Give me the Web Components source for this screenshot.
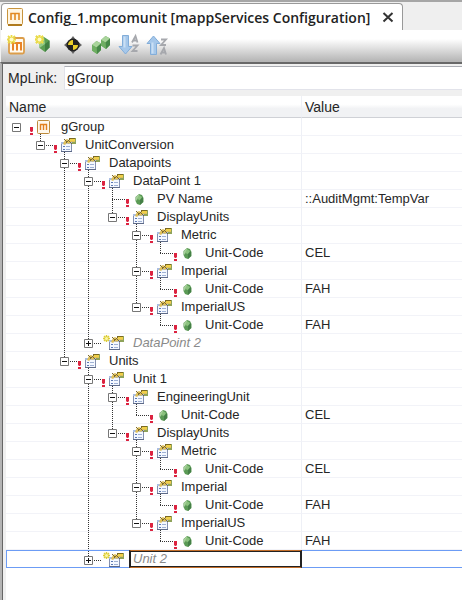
<!DOCTYPE html>
<html lang="en">
<head>
  <meta charset="utf-8">
  <title>Config_1.mpcomunit</title>
  <style>
    body {
      margin: 0;
      min-height: 100vh;
      display: flex;
      flex-direction: column;
      background: #f0f0f0;
      color: #262626;
      font: 14px "Liberation Sans", Arial, sans-serif;
    }
  </style>
</head>
<body>
  <template id="editor-tab-template">
    <style>
      :host {
        display: flex;
        height: 30px;
        box-sizing: border-box;
        border-top: 2px solid #a6a6a6;
        padding: 1px 0 0 1px;
        background: #efefef;
      }
      .tab {
        display: flex;
        align-items: center;
        box-sizing: border-box;
        width: 402px;
        padding: 0 8px 0 5px;
        border: 1px solid #999;
        border-bottom: none;
        border-radius: 4px 4px 0 0;
        background: #fff;
      }
      svg { display: block; }
      .title {
        flex: 1;
        margin-left: 5px;
        font: 600 14px "Open Sans", "Noto Sans", sans-serif;
        white-space: nowrap;
        color: #222;
      }
      button {
        padding: 0;
        border: none;
        background: none;
      }
    </style>
    <div class="tab">
      <svg width="16" height="18" viewBox="0 0 16 18">
        <rect x=".5" y=".5" width="15" height="16" rx="1" fill="#fff6e4" stroke="#c8943c"/>
        <path d="M1 17h14" stroke="#b07a1c" stroke-width="2"/>
        <path d="M4 12V5.5h8V12M8 5.5V12" fill="none" stroke="#e28a24" stroke-width="1.6"/>
      </svg>
      <span class="title"><slot></slot></span>
      <button aria-label="Close">
        <svg width="12" height="12" viewBox="0 0 12 12"><path d="M1.500 2l9 8.500M10.500 2l-9 8.500" stroke="#333" stroke-width="2"/></svg>
      </button>
    </div>
  </template>

  <template id="tool-bar-template">
    <style>
      :host {
        display: flex;
        gap: 8px;
        height: 32px;
        box-sizing: border-box;
        padding: 5px 6px 0;
        margin-left: 1px;
        background: linear-gradient(#fff 0, #fff 9px, #b6b6b6 31px);
      }
      button {
        width: 20px;
        height: 20px;
        padding: 0;
        border: none;
        background: none;
      }
      svg { display: block; overflow: visible; }
    </style>
    <button aria-label="New component">
      <svg width="20" height="20" viewBox="0 0 20 20">
        <rect x="2" y="3" width="15" height="15.500" rx="1.500" fill="#fffaf0" stroke="#dc9d4a" stroke-width="1.800"/>
        <path d="M6 15.500V8h8v7.500M10 8v7.500" fill="none" stroke="#e88326" stroke-width="2"/>
        <g id="star">
          <path d="M4.500 0v9M0 4.500h9M1 1l7 7M8 1L1 8" stroke="#eadb49" stroke-width="1.800"/>
          <circle cx="4.500" cy="4.500" r="2" fill="#fffbc4"/>
        </g>
      </svg>
    </button>
    <button aria-label="New item">
      <svg width="20" height="20" viewBox="0 0 20 20">
        <path d="M9 2l5.500 3.500v7L10 17l-5.500-4V5.500z" fill="#5b9f52"/>
        <path d="M9 2L4.500 6v7l5.500-4z" fill="#93c985"/>
        <path d="M10 9l4.500-3.500v7L10 17z" fill="#3f7f41"/>
        <use href="#star"/>
        <path d="M4.500 0v9M0 4.500h9M1 1l7 7M8 1L1 8" stroke="#eadb49" stroke-width="1.800"/>
        <circle cx="4.500" cy="4.500" r="2" fill="#fffbc4"/>
      </svg>
    </button>
    <button aria-label="Locate">
      <svg width="20" height="20" viewBox="0 0 20 20">
        <path d="M10 1l3 4 6 5-6 5-3 4-3-4-6-5 6-5z" fill="#666"/>
        <circle cx="10" cy="10" r="6.500" fill="#222"/>
        <path d="M10 10V5a5 5 0 0 0-5 5zM10 10v5a5 5 0 0 0 5-5z" fill="#ecd02a"/>
      </svg>
    </button>
    <button aria-label="Expand items">
      <svg width="20" height="20" viewBox="0 0 20 20">
        <g id="gem">
          <path d="M5.500 6L10 8.500v6.500L6 19l-5-3.500V10z" fill="#62a457"/>
          <path d="M5.500 6L1 10l4.500 2.500L10 8.500z" fill="#a9d49b"/>
          <path d="M5.500 12.500L10 8.500v6.500L6 19z" fill="#468848"/>
          <path d="M1 10l4.500 2.500L6 19l-5-3.500z" fill="#6fae63"/>
        </g>
        <use href="#gem" x="9" y="-5"/>
      </svg>
    </button>
    <button aria-label="Sort ascending">
      <svg width="20" height="20" viewBox="0 0 20 20">
        <path d="M3.500.500h6v11h3.500L6.500 19 0 11.500h3.500z" fill="#a5c7ea" stroke="#82add9"/>
        <path d="M5.500 1.500v11" stroke="#c9dff5" stroke-width="2"/>
        <path d="M13 7.500L16.500 1l2 6.500M14.500 5.500h4M13.500 10.500h5l-5 5.500h5" fill="none" stroke="#a6a8ad" stroke-width="1.800"/>
      </svg>
    </button>
    <button aria-label="Sort descending">
      <svg width="20" height="20" viewBox="0 0 20 20">
        <path d="M3.500 19.500h6v-11h3.500L6.500 1 0 8.500h3.500z" fill="#a5c7ea" stroke="#82add9"/>
        <path d="M5.500 7.500v11" stroke="#c9dff5" stroke-width="2"/>
        <path d="M14 4.500h5l-5 5.500h5M13.500 19.500L17 13l2 6.500M15 17.500h4" fill="none" stroke="#a6a8ad" stroke-width="1.800"/>
      </svg>
    </button>
  </template>

  <template id="link-field-template">
    <style>
      :host {
        display: flex;
        align-items: center;
        padding: 2px 0 6px 4px;
      }
      label { width: 56px; }
      input {
        flex: 1;
        min-width: 0;
        height: 24px;
        box-sizing: border-box;
        padding: 0 2px;
        border: 1px solid #e2e3ea;
        border-top-color: #abadb3;
        border-right: none;
        color: inherit;
        background: #fff;
        font: inherit;
      }
    </style>
    <label for="link">MpLink:</label>
    <input id="link" type="text">
  </template>

  <template id="config-tree-template">
    <style>
      :host {
        display: block;
        flex: 1;
        margin-left: 2px;
        background: #fff;
      }
      table {
        width: 100%;
        table-layout: fixed;
        border-collapse: separate;
        border-spacing: 0;
      }
      .name { width: 296px; }
      th, td {
        box-sizing: border-box;
        padding: 0 3px;
        text-align: left;
        white-space: nowrap;
      }
      th {
        height: 22px;
        font-weight: 400;
        border-bottom: 1px solid #cfd1d6;
        background: linear-gradient(#fff 40%, #f1f2f4 60%, #f1f2f4);
      }
      td {
        height: 18px;
        font-size: 13px;
        line-height: 17px;
        border-bottom: 1px solid #f2f3f8;
      }
      th:first-child, td:first-child { border-right: 1px solid #eef0f6; }
      td:first-child { padding: 0 0 0 6px; }
      .node { display: flex; height: 17px; }
      .node > * { flex: none; }
      svg { display: block; overflow: visible; }
      button {
        width: 9px;
        height: 17px;
        padding: 0;
        border: none;
        background: none;
      }
      .text { padding-left: 1px; }
      .draft .text { font-style: italic; color: #8a8a8a; }
      .selected td {
        border-top: 1px solid #6c9cf5;
        border-bottom-color: #6c9cf5;
      }
      .selected td:first-child {
        padding-left: 5px;
        border-left: 1px solid #6c9cf5;
        border-right: none;
      }
      .selected .node { height: 16px; }
      .selected .text {
        flex: 1;
        box-sizing: border-box;
        margin: -1px 0 -1px -3px;
        padding-left: 2px;
        line-height: 16px;
        border: 1px solid #c46f2a;
        border-left: 2px solid #222;
        border-right: 2px solid #222;
        box-shadow: inset 0 1px #222, inset 0 -1px #222;
      }
    </style>
    <table>
      <thead><tr><th class="name">Name</th><th>Value</th></tr></thead>
      <tbody></tbody>
    </table>
  </template>

  <template id="config-panel-template">
    <style>
      :host {
        display: flex;
        flex: 1;
        flex-direction: column;
        border-left: 2px solid #b4b4b4;
        border-top: 2px solid #686868;
        box-shadow: inset 1px 0 #666;
        padding-left: 2px;
      }
    </style>
    <slot></slot>
  </template>

  <editor-tab>Config_1.mpcomunit [mappServices Configuration]</editor-tab>
  <tool-bar></tool-bar>
  <config-panel>
    <link-field value="gGroup"></link-field>
    <config-tree></config-tree>
  </config-panel>

  <script>
    class TemplateElement extends HTMLElement {
      constructor() {
        super()
        const template = document.getElementById(this.localName + '-template').content
        this.attachShadow({ mode: 'open' }).appendChild(template.cloneNode(true))
      }
    }

    // level, name, kind, value
    const ROWS = [
      [0, 'gGroup', 'root'],
      [1, 'UnitConversion', 'group'],
      [2, 'Datapoints', 'group'],
      [3, 'DataPoint 1', 'group'],
      [4, 'PV Name', 'leaf', '::AuditMgmt:TempVar'],
      [4, 'DisplayUnits', 'group'],
      [5, 'Metric', 'group'],
      [6, 'Unit-Code', 'leaf', 'CEL'],
      [5, 'Imperial', 'group'],
      [6, 'Unit-Code', 'leaf', 'FAH'],
      [5, 'ImperialUS', 'group'],
      [6, 'Unit-Code', 'leaf', 'FAH'],
      [3, 'DataPoint 2', 'draft'],
      [2, 'Units', 'group'],
      [3, 'Unit 1', 'group'],
      [4, 'EngineeringUnit', 'group'],
      [5, 'Unit-Code', 'leaf', 'CEL'],
      [4, 'DisplayUnits', 'group'],
      [5, 'Metric', 'group'],
      [6, 'Unit-Code', 'leaf', 'CEL'],
      [5, 'Imperial', 'group'],
      [6, 'Unit-Code', 'leaf', 'FAH'],
      [5, 'ImperialUS', 'group'],
      [6, 'Unit-Code', 'leaf', 'FAH'],
      [3, 'Unit 2', 'draft', '', true]
    ]

    const svg = (width, body) => `<svg width="${width}" height="18" viewBox="0 0 ${width} 18">${body}</svg>`
    const dots = d => `<path d="${d}" fill="none" stroke="#333" stroke-dasharray="1 1"/>`

    const folder = `
      <path d="M11 2h5v6h-5z" fill="#8fa35a"/>
      <path d="M1.500 6.500h10v9h-10z" fill="#f4f8ff" stroke="#8390b0"/>
      <path d="M1 6h11v2H1z" fill="#a9bde3"/>
      <path d="M3 10.500h2M3 13.500h2" stroke="#5a78b4"/>
      <path d="M6 10.500h4M6 13.500h4" stroke="#9fb1d4"/>
      <path d="M1 15.500h11" stroke="#5d6a88"/>
      <path d="M3 8l2-4 2-1 2 1 1-2h5v4h-4l-2 2-2-1-2 2z" fill="#dfc05a"/>
      <path d="M4 3l3 3M6 7l4-4M9 5l3 3" stroke="#7b6a30"/>
      <path d="M9 2.500h6" stroke="#7c6a22"/>
      <path d="M10 4h5" stroke="#f0d048" stroke-width="2"/>`
    const icons = {
      root: `<rect x="1.500" y="2.500" width="12" height="13" rx="1" fill="#fff8ec" stroke="#bd8b3c"/>
        <path d="M4.500 12V6.500h6V12M7.500 7v5" fill="none" stroke="#e2801f" stroke-width="1.400"/>`,
      group: folder,
      draft: folder,
      leaf: `<path d="M7 4l3 1 1.500 3v4L8 15l-3-1-1.500-3V7z" fill="#5a9a55"/>
        <path d="M7 4L4 7v4l3-4z" fill="#a8d09c"/>
        <path d="M7 5l3 2-2 3-3-1z" fill="#8bc27e"/>
        <path d="M8 10l3-3v5l-3 3z" fill="#457f47"/>`
    }
    const required = '<path d="M9 9h3v4l-1 1h-1l-1-1zM9 15h3v2H9z" fill="#dc2340"/>'
    const star = `<path d="M13.500 1v7M10 4.500h7M11 2l5 5M16 2l-5 5" stroke="#dccd35" stroke-width="1.400"/>
      <circle cx="13.500" cy="4.500" r="1.500" fill="#fdf7a8"/>`

    // true when another row on this level follows inside the same parent
    function continues(index, level) {
      for (let i = index + 1; i < ROWS.length; i++) {
        if (ROWS[i][0] < level) return false
        if (ROWS[i][0] === level) return true
      }
      return false
    }

    function nodeMarkup([level, name, kind], index) {
      let html = ''
      for (let i = 0; i < level; i++) {
        html += svg(24, i > 0 && continues(index, i) ? dots('M4.500 0V18') : '')
      }
      const more = continues(index, level)
      if (kind === 'leaf') {
        html += svg(9, dots(more ? 'M4.500 0V18' : 'M4.500 0V9') + dots('M4 9.500H9'))
      } else {
        const closed = kind === 'draft'
        html += `<button aria-label="${name}" aria-expanded="${!closed}">` + svg(9,
          (level ? dots('M4.500 0V5') : '') + (more ? dots('M4.500 14V18') : '') +
          '<path d="M.5 5.500h8v8h-8z" fill="#fff" stroke="#777"/>' +
          `<path d="M2 9.500h5${closed ? 'M4.500 7v5' : ''}" stroke="#111"/>`) + '</button>'
      }
      html += svg(15, (level ? dots('M1 9.500H8') : '') + (kind === 'draft' ? star : required))
      const parent = ROWS[index + 1] && ROWS[index + 1][0] > level
      html += svg(24, (parent ? dots('M4.500 16V18') : '') + icons[kind])
      return `<div class="node">${html}<span class="text">${name}</span></div>`
    }

    customElements.define('editor-tab', class extends TemplateElement {})
    customElements.define('tool-bar', class extends TemplateElement {})
    customElements.define('config-panel', class extends TemplateElement {})

    customElements.define('link-field', class extends TemplateElement {
      connectedCallback() {
        this.shadowRoot.querySelector('input').value = this.getAttribute('value')
      }
    })

    customElements.define('config-tree', class extends TemplateElement {
      connectedCallback() {
        this.shadowRoot.querySelector('tbody').innerHTML = ROWS.map((row, i) =>
          `<tr class="${row[2]}${row[4] ? ' selected' : ''}"><td>${nodeMarkup(row, i)}</td><td>${row[3] || ''}</td></tr>`
        ).join('')
      }
    })
  </script>
</body>
</html>
